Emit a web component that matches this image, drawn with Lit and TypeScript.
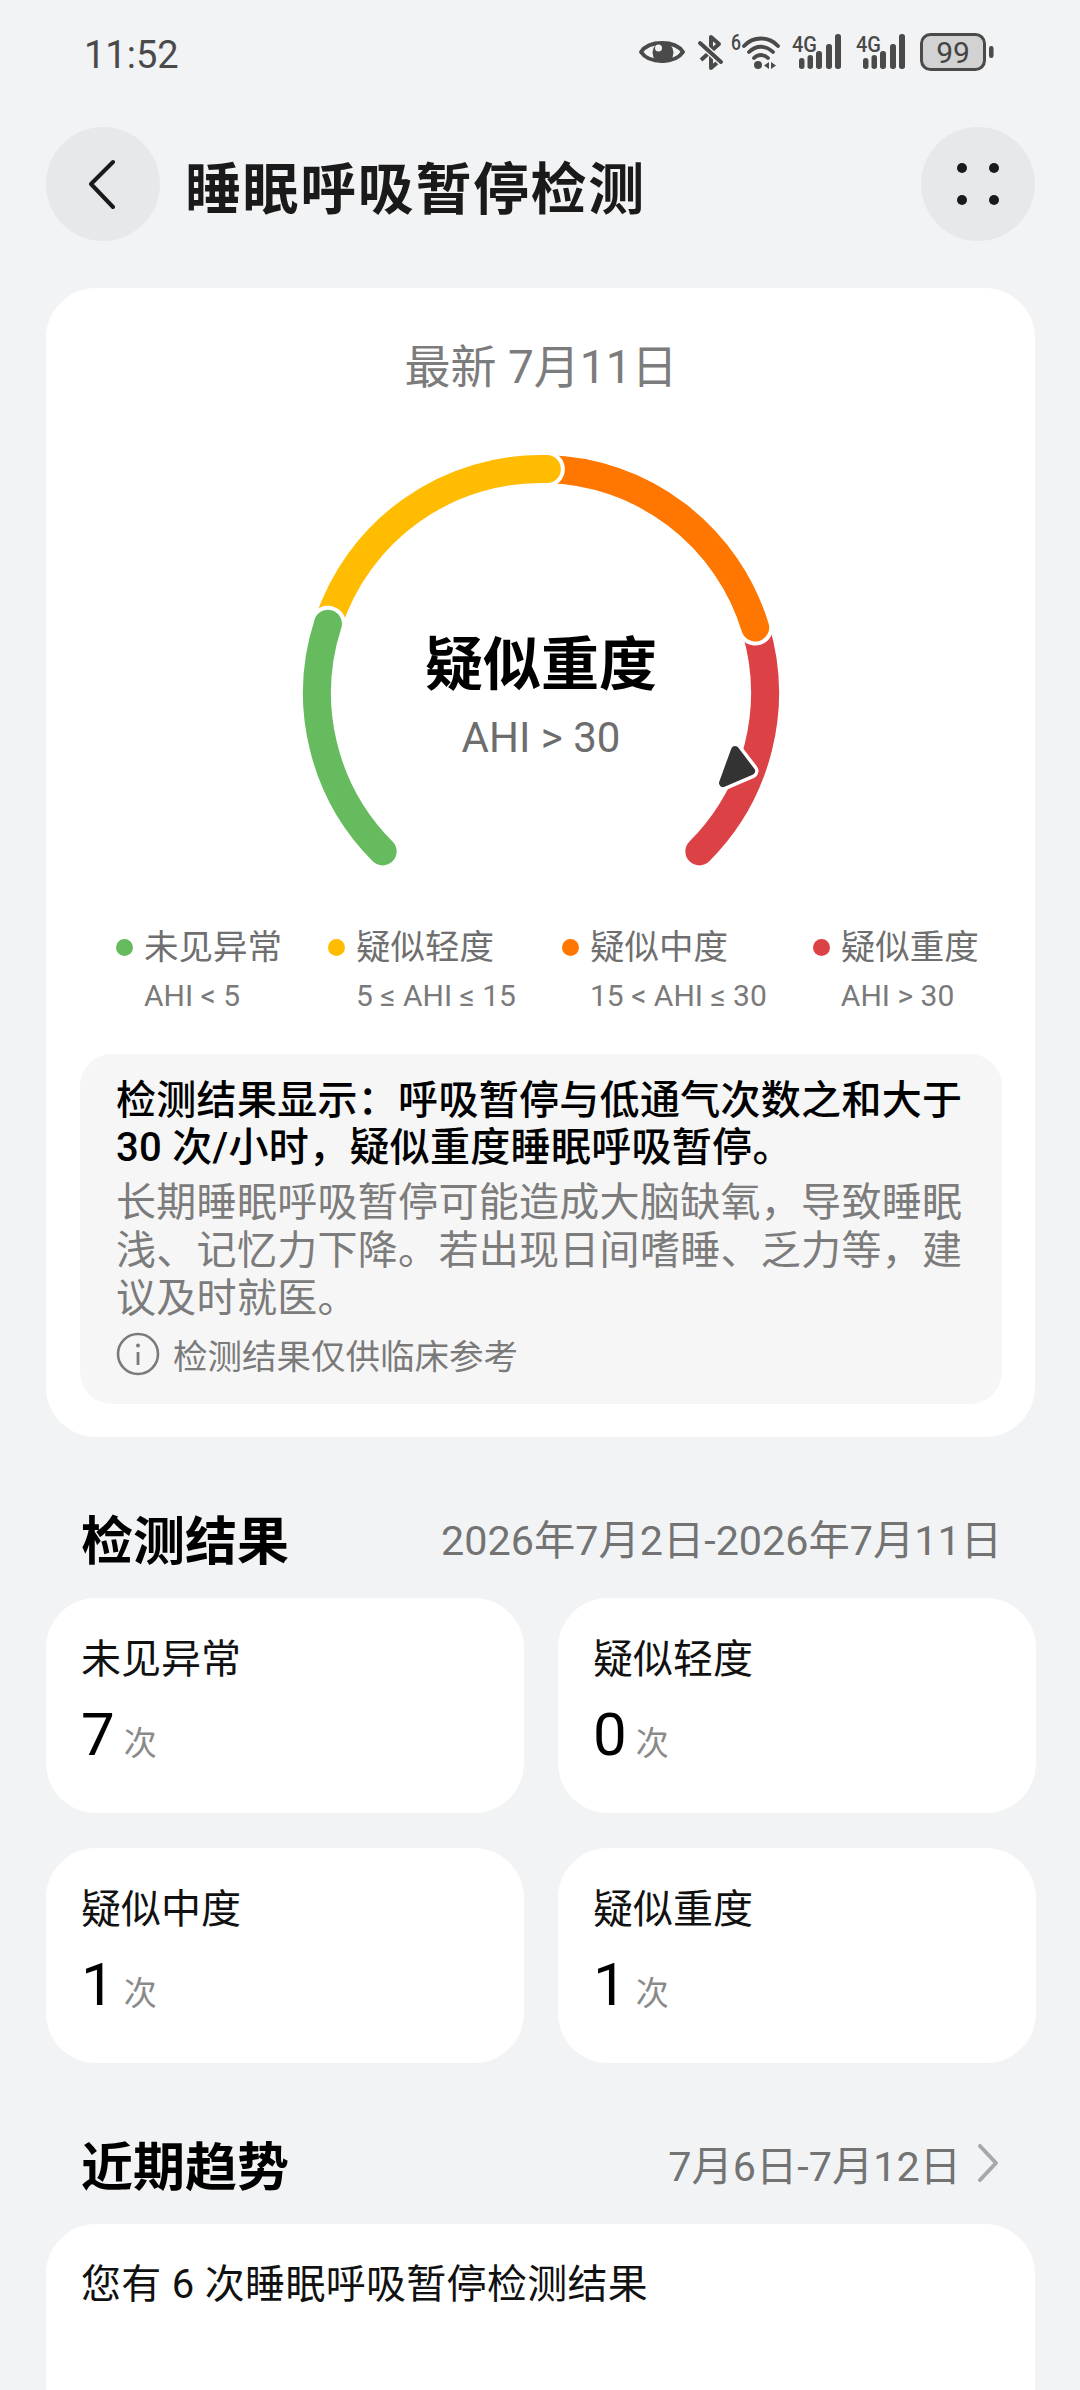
import { LitElement, html, css, svg } from 'lit';
import { customElement } from 'lit/decorators.js';

const GAUGE_CX = 260;
const GAUGE_CY = 253;
const GAUGE_R = 224;

// angles are clockwise from twelve o'clock
function arcPath(from: number, to: number) {
  const pt = (deg: number) => {
    const a = (deg * Math.PI) / 180;
    return `${(GAUGE_CX + GAUGE_R * Math.sin(a)).toFixed(2)} ${(GAUGE_CY - GAUGE_R * Math.cos(a)).toFixed(2)}`;
  };
  const large = to - from > 180 ? 1 : 0;
  return `M${pt(from)} A${GAUGE_R} ${GAUGE_R} 0 ${large} 1 ${pt(to)}`;
}

// drawn back to front so each rounded end sits over the next colour
const SEGMENTS = [
  { from: 73, to: 135, color: '#dc4146' },
  { from: 1.5, to: 73, color: '#ff7700' },
  { from: -72, to: 1.5, color: '#ffbc00' },
  { from: -135, to: -72, color: '#66bb5f' },
];

const LEGEND = [
  { name: '未见异常', range: 'AHI < 5', color: '#66bb5f' },
  { name: '疑似轻度', range: '5 ≤ AHI ≤ 15', color: '#ffbc00' },
  { name: '疑似中度', range: '15 < AHI ≤ 30', color: '#ff7700' },
  { name: '疑似重度', range: 'AHI > 30', color: '#dc4146' },
];

const STATS = [
  { name: '未见异常', count: 7 },
  { name: '疑似轻度', count: 0 },
  { name: '疑似中度', count: 1 },
  { name: '疑似重度', count: 1 },
];

const signalIcon = html`
  <svg class="signal" width="50" height="36" viewBox="0 0 50 36">
    <text x="0" y="18" class="net" textLength="25" lengthAdjust="spacingAndGlyphs">4G</text>
    <rect x="7" y="24" width="5.5" height="11" rx="2.7" />
    <rect x="15.5" y="21" width="5.5" height="14" rx="2.7" />
    <rect x="24" y="17" width="6" height="18" rx="2.7" />
    <rect x="34" y="10" width="6" height="25" rx="2.7" />
    <rect x="43" y="0" width="6" height="35" rx="2.7" />
  </svg>
`;

@customElement('app-root')
export class AppRoot extends LitElement {
  static styles = css`
    :host {
      display: block;
      width: 1080px;
      height: 2390px;
      overflow: hidden;
      background: #f1f3f5;
      color: #111;
      font-family: Roboto, 'Noto Sans CJK SC', sans-serif;
    }

    .status {
      height: 104px;
      padding: 0 86px 0 84px;
      display: flex;
      align-items: center;
      justify-content: space-between;
      box-sizing: border-box;
      color: #4a4a4a;
    }

    .time {
      font-size: 38px;
      margin-top: 6px;
    }

    .status-icons {
      display: flex;
      align-items: center;
    }

    .status-icons svg {
      display: block;
      fill: #4a4a4a;
      overflow: visible;
    }

    .net {
      font-family: Roboto, sans-serif;
      font-size: 22px;
      font-weight: 500;
      fill: #4a4a4a;
    }

    .eye {
      margin-right: 13px;
    }

    .bt {
      margin-right: 8px;
    }

    .wifi {
      margin-right: 11px;
    }

    .signal {
      margin-right: 14px;
    }

    .topbar {
      height: 114px;
      margin-top: 23px;
      padding: 0 45px 0 46px;
      display: flex;
      align-items: center;
    }

    .round-btn {
      width: 114px;
      height: 114px;
      border-radius: 50%;
      background: #e7e8ea;
      display: flex;
      align-items: center;
      justify-content: center;
      flex: none;
    }

    .back-icon {
      margin-left: -3px;
    }

    .title {
      flex: 1;
      margin-left: 25px;
      font-size: 56px;
      font-weight: 700;
      letter-spacing: 1.6px;
      color: #1a1a1a;
    }

    .card {
      background: #fff;
      border-radius: 50px;
      margin: 0 45px 0 46px;
    }

    .result-card {
      margin-top: 47px;
      padding: 48px 33px 33px 34px;
    }

    .latest {
      height: 60px;
      line-height: 60px;
      margin-top: 1px;
      text-align: center;
      font-size: 46px;
      color: #7c7c7c;
    }

    .gauge {
      position: relative;
      width: 520px;
      height: 440px;
      margin: 43px auto 0;
    }

    .gauge svg {
      display: block;
    }

    .gauge-label {
      position: absolute;
      left: 0;
      right: 0;
      top: 190px;
      text-align: center;
    }

    .gauge-name {
      font-size: 58px;
      font-weight: 700;
      line-height: 70px;
      color: #000;
    }

    .gauge-range {
      font-size: 42px;
      line-height: 50px;
      margin-top: 13px;
      color: #6d6d6d;
    }

    .legend {
      display: flex;
      gap: 46px;
      margin: 45px 0 0 36px;
    }

    .legend-item {
      display: flex;
      gap: 11px;
      white-space: nowrap;
    }

    .legend-dot {
      width: 17px;
      height: 17px;
      border-radius: 50%;
      margin-top: 14px;
      flex: none;
    }

    .legend-name {
      font-size: 34.5px;
      line-height: 44px;
      color: #6f6f6f;
    }

    .legend-range {
      font-size: 30px;
      line-height: 40px;
      margin-top: 7px;
      color: #7a7a7a;
    }

    .advice {
      margin-top: 38px;
      padding: 23px 36px 28px;
      background: #f6f6f6;
      border-radius: 32px;
      font-size: 40px;
      letter-spacing: 0.3px;
    }

    .advice-main {
      line-height: 47px;
      font-weight: 500;
      color: #000;
    }

    .advice-sub {
      margin-top: 8px;
      line-height: 48px;
      color: #7c7c7c;
    }

    .advice-note {
      margin-top: 9px;
      height: 44px;
      display: flex;
      align-items: center;
      gap: 13px;
      font-size: 34.5px;
      letter-spacing: 0;
      color: #7a7a7a;
    }

    .section-head {
      height: 70px;
      padding: 0 78px 0 81px;
      display: flex;
      align-items: center;
      justify-content: space-between;
    }

    .section-title {
      font-size: 52px;
      font-weight: 700;
      color: #000;
    }

    .section-range {
      display: flex;
      align-items: center;
      gap: 16px;
      font-size: 41.3px;
      color: #737373;
    }

    .results-head {
      margin-top: 65px;
    }

    .trend-head {
      margin-top: 65px;
      padding-right: 81px;
    }

    .stats {
      display: grid;
      grid-template-columns: 478px 478px;
      gap: 35px 34px;
      margin: 26px 45px 0 46px;
    }

    .stat {
      height: 215px;
      box-sizing: border-box;
      padding: 37px 35px 0;
      background: #fff;
      border-radius: 50px;
    }

    .stat-name {
      font-size: 40px;
      line-height: 50px;
      color: #111;
    }

    .stat-value {
      display: flex;
      align-items: baseline;
      gap: 9px;
      height: 70px;
      line-height: 70px;
      margin-top: 15px;
      font-size: 60px;
      color: #000;
    }

    .stat-unit {
      font-size: 33px;
      color: #8a8a8a;
    }

    .trend-card {
      margin-top: 26px;
      height: 300px;
      padding: 36px 35px 0;
    }

    .trend-text {
      font-size: 40px;
      letter-spacing: 0.3px;
      line-height: 50px;
      color: #111;
    }
  `;

  private renderGauge() {
    return html`
      <div class="gauge">
        <svg width="520" height="440" viewBox="0 0 520 440" fill="none" stroke-linecap="round">
          ${SEGMENTS.map(
            (s) => svg`
              <path d=${arcPath(s.from, s.to)} stroke="#fff" stroke-width="36" />
              <path d=${arcPath(s.from, s.to)} stroke=${s.color} stroke-width="28" />
            `
          )}
          <path d="M454 310 L470 331 L442 343 Z" fill="#fff" stroke="#fff" stroke-width="15" stroke-linejoin="round" />
          <path d="M454 310 L470 331 L442 343 Z" fill="#333" stroke="#333" stroke-width="8" stroke-linejoin="round" />
        </svg>
        <div class="gauge-label">
          <div class="gauge-name">疑似重度</div>
          <div class="gauge-range">AHI &gt; 30</div>
        </div>
      </div>
    `;
  }

  render() {
    return html`
      <div class="status">
        <span class="time">11:52</span>
        <div class="status-icons">
          <svg class="eye" width="46" height="30" viewBox="0 0 46 30">
            <path d="M2 15C10 3 36 3 44 15C36 27 10 27 2 15Z" fill="none" stroke="#4a4a4a" stroke-width="4" stroke-linejoin="round" />
            <circle cx="24" cy="15.5" r="10.5" />
            <circle cx="19.5" cy="11" r="3.5" fill="#f1f3f5" />
          </svg>
          <svg class="bt" width="25" height="35" viewBox="0 0 25 35">
            <path d="M3 25L21 9L13 2V33L21 26" fill="none" stroke="#4a4a4a" stroke-width="4" stroke-linejoin="round" />
            <path d="M0 6L25 29" stroke="#f1f3f5" stroke-width="7" />
            <path d="M2 8L23 27" stroke="#4a4a4a" stroke-width="4" stroke-linecap="round" />
          </svg>
          <svg class="wifi" width="50" height="36" viewBox="0 0 50 36">
            <text x="0" y="16" class="net" textLength="10" lengthAdjust="spacingAndGlyphs">6</text>
            <g fill="none" stroke="#4a4a4a" stroke-width="3.8" stroke-linecap="round">
              <path d="M13 12C22 2 38 2 47 12" />
              <path d="M18 18C25 11 35 11 42 18" />
              <path d="M23 24C27 20 33 20 37 24" />
            </g>
            <circle cx="27" cy="31" r="4" />
            <path d="M38 28V35L33 31.5ZM40 28V35L45 31.5Z" />
          </svg>
          ${signalIcon} ${signalIcon}
          <svg width="74" height="38" viewBox="0 0 74 38">
            <rect x="1.5" y="1.5" width="63" height="35" rx="9" fill="#d2d2d2" stroke="#4a4a4a" stroke-width="3" />
            <text x="33" y="29.5" text-anchor="middle" font-family="Roboto, sans-serif" font-size="30" fill="#444">99</text>
            <rect x="69" y="13" width="4.5" height="12" rx="2.2" />
          </svg>
        </div>
      </div>

      <div class="topbar">
        <div class="round-btn">
          <svg class="back-icon" width="30" height="50" viewBox="0 0 30 50" fill="none">
            <path d="M26 3L4 25L26 48" stroke="#1a1a1a" stroke-width="4" stroke-linecap="round" stroke-linejoin="round" />
          </svg>
        </div>
        <div class="title">睡眠呼吸暂停检测</div>
        <div class="round-btn">
          <svg width="44" height="44" viewBox="0 0 44 44" fill="#1a1a1a">
            <circle cx="6" cy="6" r="5" />
            <circle cx="38" cy="6" r="5" />
            <circle cx="6" cy="38" r="5" />
            <circle cx="38" cy="38" r="5" />
          </svg>
        </div>
      </div>

      <div class="card result-card">
        <div class="latest">最新 7月11日</div>
        ${this.renderGauge()}
        <div class="legend">
          ${LEGEND.map(
            (l) => html`
              <div class="legend-item">
                <span class="legend-dot" style="background:${l.color}"></span>
                <div>
                  <div class="legend-name">${l.name}</div>
                  <div class="legend-range">${l.range}</div>
                </div>
              </div>
            `
          )}
        </div>
        <div class="advice">
          <div class="advice-main">检测结果显示：呼吸暂停与低通气次数之和大于 30 次/小时，疑似重度睡眠呼吸暂停。</div>
          <div class="advice-sub">长期睡眠呼吸暂停可能造成大脑缺氧，导致睡眠浅、记忆力下降。若出现日间嗜睡、乏力等，建议及时就医。</div>
          <div class="advice-note">
            <svg width="44" height="44" viewBox="0 0 44 44" fill="none">
              <circle cx="22" cy="22" r="20" stroke="#7a7a7a" stroke-width="2.6" />
              <circle cx="22" cy="13.5" r="2" fill="#7a7a7a" />
              <path d="M22 20V33" stroke="#7a7a7a" stroke-width="2.8" />
            </svg>
            <span>检测结果仅供临床参考</span>
          </div>
        </div>
      </div>

      <div class="section-head results-head">
        <span class="section-title">检测结果</span>
        <span class="section-range">2026年7月2日-2026年7月11日</span>
      </div>
      <div class="stats">
        ${STATS.map(
          (s) => html`
            <div class="stat">
              <div class="stat-name">${s.name}</div>
              <div class="stat-value">${s.count}<span class="stat-unit">次</span></div>
            </div>
          `
        )}
      </div>

      <div class="section-head trend-head">
        <span class="section-title">近期趋势</span>
        <span class="section-range">
          7月6日-7月12日
          <svg width="22" height="38" viewBox="0 0 22 38" fill="none">
            <path d="M3 2L19 19L3 36" stroke="#a8a8a8" stroke-width="4" stroke-linecap="round" stroke-linejoin="round" />
          </svg>
        </span>
      </div>
      <div class="card trend-card">
        <div class="trend-text">您有 6 次睡眠呼吸暂停检测结果</div>
      </div>
    `;
  }
}
